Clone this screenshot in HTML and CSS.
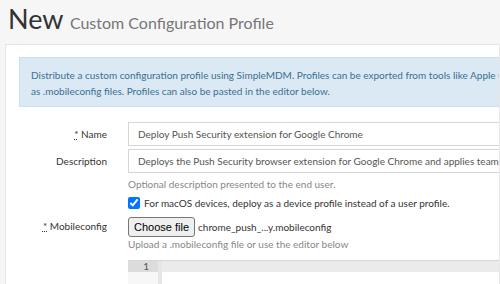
FILE: index.html
```html
<!DOCTYPE html>
<html>
<head>
    <title>New Custom Configuration Profile</title>
    <link rel="stylesheet" href="styles.css">
</head>
<body>
    <h1 class="page-title">New <small>Custom Configuration Profile</small></h1>

    <div class="panel">
        <div class="alert-info">
            Distribute a custom configuration profile using SimpleMDM. Profiles can be exported from tools like Apple Configurator<br>
            as .mobileconfig files. Profiles can also be pasted in the editor below.
        </div>

        <form class="form">
            <label class="label"><abbr title="required">*</abbr> Name</label>
            <div class="field">
                <input class="input" type="text" value="Deploy Push Security extension for Google Chrome">
            </div>

            <label class="label">Description</label>
            <div class="field">
                <input class="input" type="text" value="Deploys the Push Security browser extension for Google Chrome and applies team-specific settings">
                <div class="hint">Optional description presented to the end user.</div>
            </div>

            <div></div>
            <div class="field check-row">
                <input type="checkbox" checked>
                <span>For macOS devices, deploy as a device profile instead of a user profile.</span>
            </div>

            <label class="label label-file"><abbr title="required">*</abbr> Mobileconfig</label>
            <div class="field">
                <div class="file-row">
                    <button type="button" class="file-btn">Choose file</button>
                    <span class="file-name">chrome_push_...y.mobileconfig</span>
                </div>
                <div class="hint hint-tight">Upload a .mobileconfig file or use the editor below</div>
                <div class="editor">
                    <div class="gutter"><div class="gutter-cell">1</div></div>
                    <div class="lines"><div class="active-line"></div></div>
                </div>
            </div>
        </form>
    </div>
</body>
</html>
```

FILE: styles.css
```css
body { margin: 0; background: #f6f6f6; font-family: Lato, "Open Sans", sans-serif; color: #333; overflow: hidden; height: 284px; }
.page-title { margin: 0; padding: 3px 0 0 8px; height: 41px; font-size: 27px; font-weight: 400; color: #333; line-height: 32px; white-space: nowrap; }
.page-title small { font-size: 16px; color: #777; }

.panel { margin-left: 5px; background: #fff; border: 1px solid #e6e6e6; padding: 12px 0 0 13px; height: 400px; }
.alert-info { background: #dbe9f5; border: 1px solid #c6e2ef; border-right: none; color: #3a6f91; font-size: 10px; line-height: 16px; padding: 9px 0 7px 11px; white-space: nowrap; overflow: hidden; }

.form { display: grid; grid-template-columns: 88px 1fr; column-gap: 21px; row-gap: 3px; margin-top: 15px; font-size: 10px; }
.label { text-align: right; line-height: 24px; color: #333; }
.label abbr { text-decoration: underline dotted; cursor: help; }
.field { white-space: nowrap; overflow: hidden; }
.input { display: block; box-sizing: border-box; width: 600px; height: 24px; border: 1px solid #d6d6d6; padding: 0 9px; font-family: Lato, sans-serif; font-size: 10px; color: #555; }
.hint { color: #888; line-height: 16px; margin-top: 3px; }
.hint-tight { line-height: 14px; margin-top: 0; }

.check-row { display: flex; align-items: center; gap: 4px; height: 20px; margin-top: -2px; color: #333; }
.check-row input { margin: 0; width: 12px; height: 12px; }

.label-file { line-height: 21px; }
.file-row { display: flex; align-items: center; gap: 3px; height: 21px; }
.file-btn { font-family: "Liberation Sans", Arial, sans-serif; font-size: 11px; height: 20px; padding: 0 5px; background: #efefef; border: 1px solid #767676; border-radius: 3px; color: #000; }
.file-name { color: #333; }

.editor { display: flex; margin-top: 9px; border-top: 1px solid #d6d6d6; height: 60px; }
.gutter { width: 30px; background: #f7f7f7; }
.gutter-cell { background: #dcdcdc; text-align: right; padding-right: 9px; line-height: 11px; font-size: 10px; color: #555; }
.lines { flex: 1; border-left: 4px solid #e6e6e6; }
.active-line { height: 11px; background: #ebebeb; }
```
